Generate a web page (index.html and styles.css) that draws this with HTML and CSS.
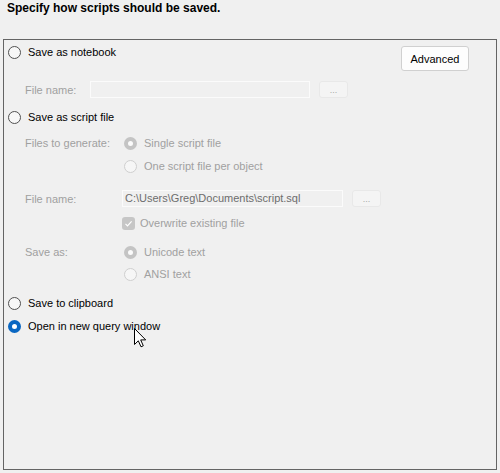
FILE: index.html
```html
<!DOCTYPE html>
<html>
<head>
<meta charset="utf-8">
<link rel="stylesheet" href="styles.css">
</head>
<body>
<div class="title">Specify how scripts should be saved.</div>
<div class="panel">
  <div class="row top">
    <div class="opt"><span class="radio"></span><span>Save as notebook</span></div>
    <div class="btn">Advanced</div>
  </div>
  <div class="row nbfile">
    <span class="lbl nblbl">File name:</span>
    <span class="input in1"></span>
    <span class="browse">...</span>
  </div>
  <div class="opt r2"><span class="radio"></span><span>Save as script file</span></div>
  <div class="sub">
    <div class="row srow ftg">
      <span class="lbl slbl">Files to generate:</span>
      <div class="opt dis"><span class="radio dchk"></span><span>Single script file</span></div>
    </div>
    <div class="row srow opo">
      <span class="lbl slbl"></span>
      <div class="opt dis"><span class="radio dun"></span><span>One script file per object</span></div>
    </div>
    <div class="row srow fn">
      <span class="lbl slbl">File name:</span>
      <span class="input in2">C:\Users\Greg\Documents\script.sql</span>
      <span class="browse">...</span>
    </div>
    <div class="row srow ow">
      <span class="lbl slbl"></span>
      <div class="opt dis cbopt"><span class="cb"><svg width="13" height="13" viewBox="0 0 13 13"><path d="M3.5 6.8 L5.5 8.8 L9.6 4.4" fill="none" stroke="#fff" stroke-width="1.2"/></svg></span><span>Overwrite existing file</span></div>
    </div>
    <div class="row srow sa">
      <span class="lbl slbl">Save as:</span>
      <div class="opt dis"><span class="radio dchk"></span><span>Unicode text</span></div>
    </div>
    <div class="row srow ansi">
      <span class="lbl slbl"></span>
      <div class="opt dis"><span class="radio dun"></span><span>ANSI text</span></div>
    </div>
  </div>
  <div class="opt clip"><span class="radio"></span><span>Save to clipboard</span></div>
  <div class="opt open"><span class="radio chk"></span><span>Open in new query window</span></div>
</div>
<svg class="cursor" width="13" height="20" viewBox="0 0 13 20"><path d="M0.5 0.5 V16.5 L4.3 12.8 L7 18.8 L9.3 17.8 L6.7 11.9 H11.7 Z" fill="#fff" stroke="#000" stroke-width="1" stroke-linejoin="miter"/></svg>
</body>
</html>
```
FILE: styles.css
```css
html, body {
  margin: 0;
  padding: 0;
  background: #f0f0f0;
  width: 500px;
  height: 473px;
  overflow: hidden;
  font-family: "Liberation Sans", Arial, sans-serif;
  font-size: 11px;
  color: #000;
}
body { position: relative; }
.title {
  font-weight: bold;
  font-size: 12px;
  padding: 1px 0 0 7px;
  line-height: 14px;
  height: 15px;
}
.panel {
  margin: 23px 0 0 3px;
  width: 488px;
  height: 429px;
  border: 1px solid #646464;
  padding: 0 0 0 4px;
  box-sizing: content-box;
}
.row {
  display: flex;
  align-items: center;
}
.top {
  align-items: flex-start;
  justify-content: space-between;
  padding-top: 3px;
  padding-right: 27px;
}
.opt {
  display: flex;
  align-items: center;
  height: 18px;
  line-height: 18px;
  gap: 7px;
}
.radio {
  width: 13px;
  height: 13px;
  box-sizing: border-box;
  border-radius: 50%;
  border: 1px solid #505050;
  background: #f7f7f7;
  flex: none;
}
.radio.chk {
  border: 4px solid #0a67c2;
  background: #fff;
}
.radio.dchk {
  border: 4px solid #c4c4c4;
  background: #fbfbfb;
}
.radio.dun {
  border: 1px solid #cfcfcf;
  background: #f6f6f6;
}
.btn {
  margin-top: 3px;
  width: 68px;
  height: 25px;
  box-sizing: border-box;
  border: 1px solid #d0d0d0;
  border-radius: 3px;
  background: #fdfdfd;
  display: flex;
  align-items: center;
  justify-content: center;
}
.lbl { color: #a0a0a0; flex: none; }
.nblbl { margin-left: 17px; width: 65px; }
.input {
  height: 17px;
  box-sizing: border-box;
  border: 1px solid #fbfbfb;
  background: #f0f0f0;
  color: #6d6d6d;
  line-height: 15px;
  padding-left: 2px;
  flex: none;
}
.in1 { width: 220px; }
.in2 { width: 221px; }
.browse {
  margin-left: 9px;
  width: 29px;
  height: 17px;
  box-sizing: border-box;
  border: 1px solid #e8e8e8;
  border-radius: 3px;
  background: #f4f4f4;
  color: #a8a8a8;
  font-size: 9px;
  text-align: center;
  line-height: 17px;
}
.nbfile { margin-top: 10px; }
.r2 { margin-top: 10px; }
.sub { margin-left: 17px; }
.slbl { width: 97px; }
.srow .opt { margin-left: 2px; }
.srow .cbopt { margin-left: 0; gap: 5px; }
.dis { color: #a0a0a0; }
.ftg { margin-top: 8px; height: 18px; }
.opo { margin-top: 5px; height: 18px; }
.fn { margin-top: 15px; height: 17px; }
.ow { margin-top: 7px; height: 18px; }
.sa { margin-top: 11px; height: 18px; }
.ansi { margin-top: 4px; height: 18px; }
.clip { margin-top: 11px; }
.open { margin-top: 5px; }
.cb {
  width: 13px;
  height: 13px;
  border-radius: 3px;
  background: #c6c6c6;
  display: block;
  flex: none;
}
.cb svg { display: block; }
.cursor {
  position: absolute;
  left: 134px;
  top: 328px;
}
```
